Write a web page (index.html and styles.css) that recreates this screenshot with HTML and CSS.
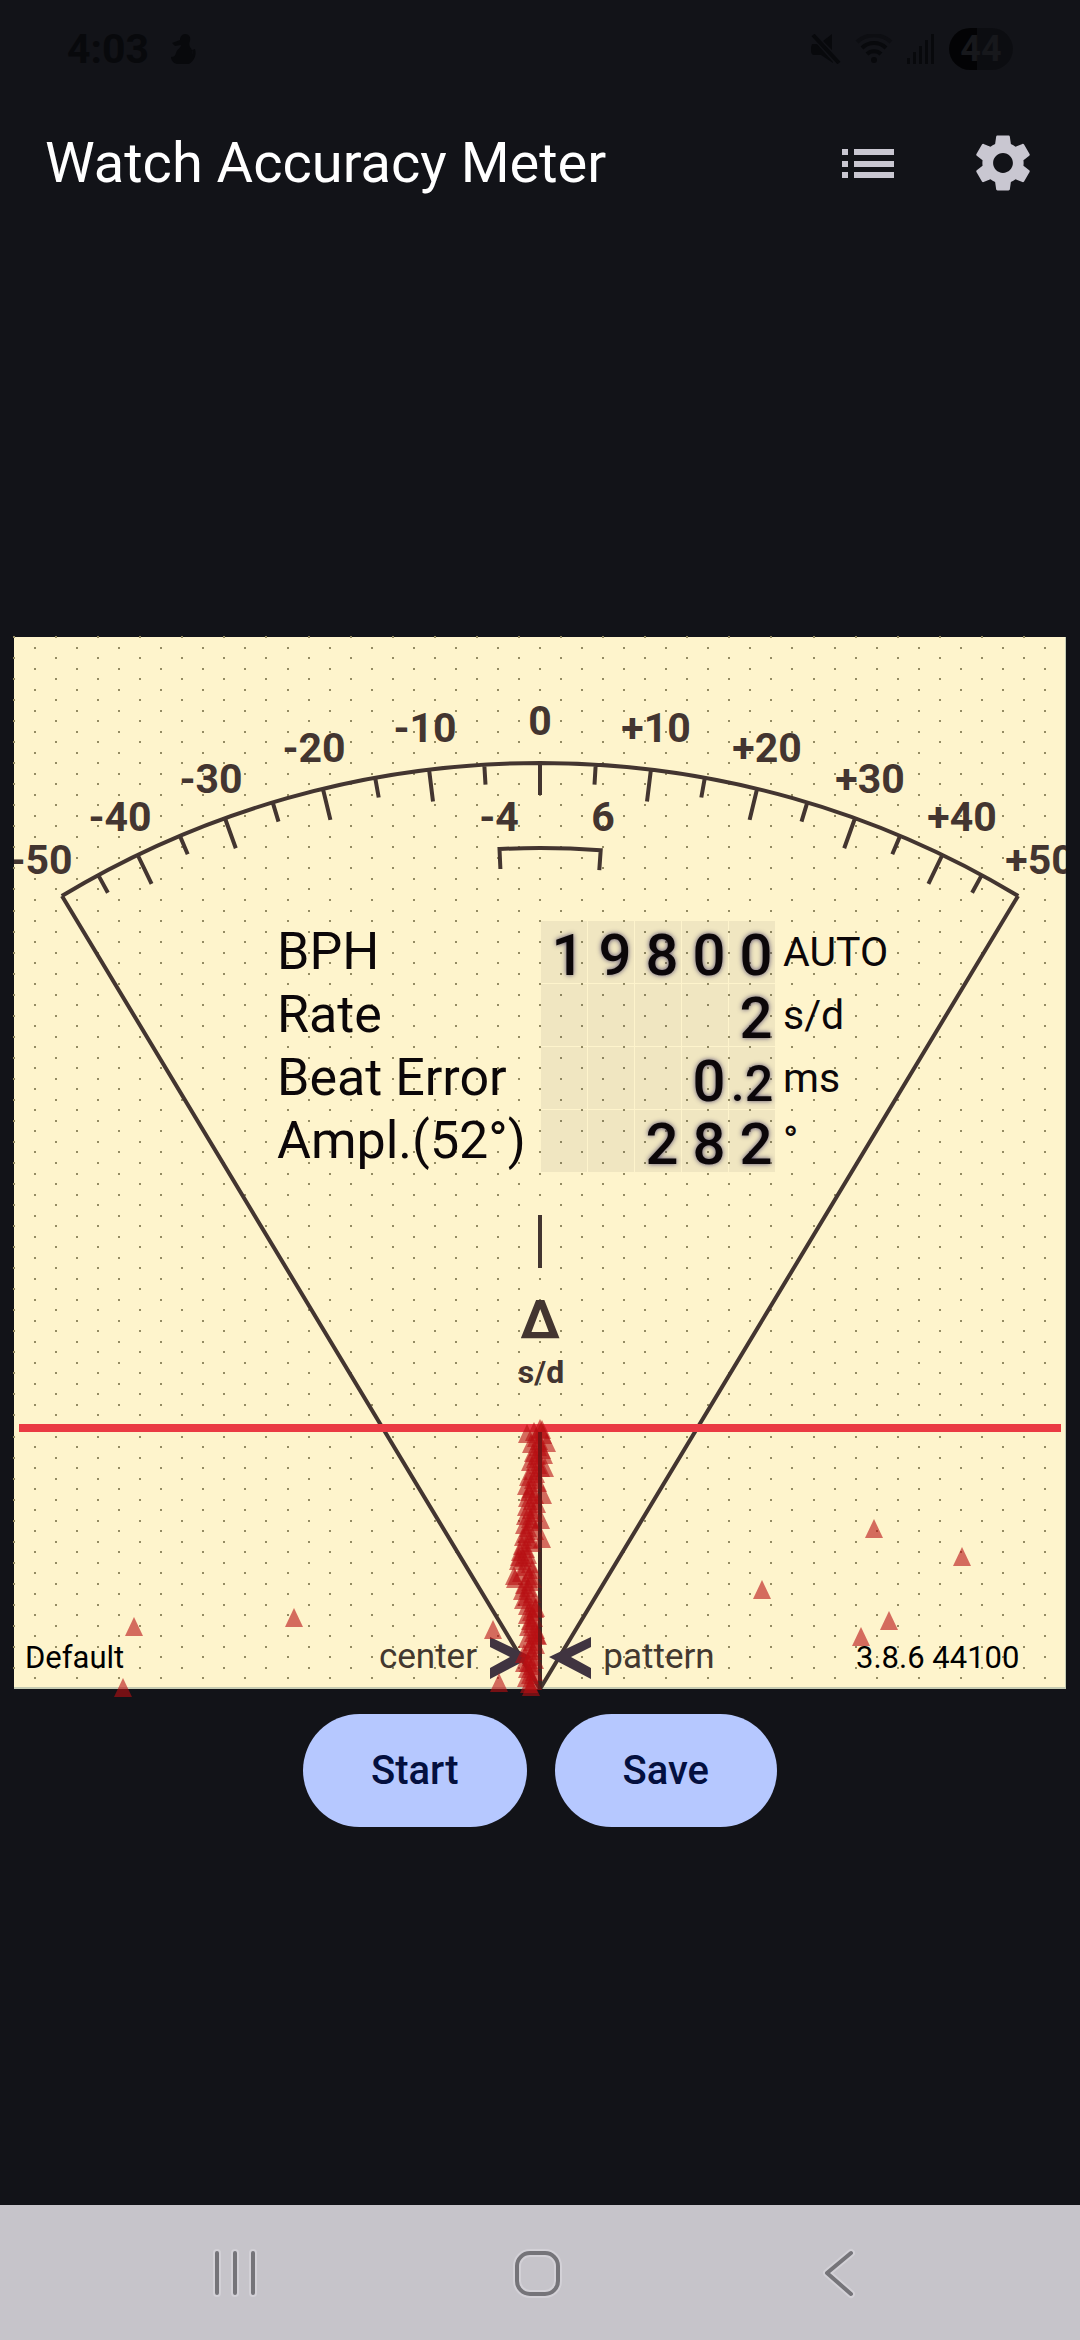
FILE: index.html
```html
<!DOCTYPE html>
<html lang="en">

<head>
    <meta charset="UTF-8">
    <meta name="viewport" content="width=device-width, initial-scale=1.0">
    <title>Watch Accuracy Meter</title>
    <link rel="stylesheet" href="styles.css">
</head>

<body>
    <div class="status-bar">
        <div class="status-left">
            <span class="clock">4:03</span>
            <svg class="status-icon" width="26" height="30" viewBox="0 0 26 30">
                <path d="M14 0c4 0 6 3 5 7-1 2-1 4 0 6 2 2 3 5 2 8 1-2 1-3 0-5l3-1c2 6-1 12-6 15H6c-4-1-6-4-6-7 3 0 4-1 5-4 1-4 5-5 5-8L4 12l-3-3 8-3c0-3 2-6 5-6z" />
            </svg>
        </div>
        <div class="status-right">
            <svg class="status-icon" width="30" height="30" viewBox="0 0 30 30">
                <path d="M1 10h5l16 18v1L10 21H3c-2 0-3-2-3-4v-4zM12 7l9-7v16z" />
                <path class="status-line" d="M2 1l26 28" />
            </svg>
            <svg class="status-icon" width="38" height="30" viewBox="0 0 38 30">
                <path class="status-line faint" d="M2 8a25 25 0 0 1 34 0" />
                <path class="status-line" d="M7 14a17 17 0 0 1 24 0M12 20a10 10 0 0 1 14 0" />
                <circle cx="19" cy="26" r="3" />
            </svg>
            <svg class="status-icon" width="28" height="30" viewBox="0 0 28 30">
                <path d="M0 24h3v6H0zM6 18h3v12H6zM12 12h3v18h-3zM18 6h3v24h-3zM24 0h3v30h-3z" />
            </svg>
            <span class="battery">44</span>
        </div>
    </div>

    <header class="app-bar">
        <h1>Watch Accuracy Meter</h1>
        <button type="button" class="icon-button" aria-label="List">
            <svg width="52" height="29" viewBox="0 0 52 29">
                <path d="M0 0h6v6H0zM12 0h40v6H12zM0 12h6v6H0zM12 12h40v6H12zM0 23h6v6H0zM12 23h40v6H12z" />
            </svg>
        </button>
        <button type="button" class="icon-button" aria-label="Settings">
            <svg width="66" height="66" viewBox="0 0 24 24">
                <path d="M19.43 12.98c.04-.32.07-.64.07-.98s-.03-.66-.07-.98l2.11-1.65c.19-.15.24-.42.12-.64l-2-3.46c-.12-.22-.39-.3-.61-.22l-2.49 1c-.52-.4-1.08-.73-1.69-.98l-.38-2.65C14.46 2.18 14.25 2 14 2h-4c-.25 0-.46.18-.49.42l-.38 2.65c-.61.25-1.17.59-1.69.98l-2.49-1c-.23-.09-.49 0-.61.22l-2 3.46c-.13.22-.07.49.12.64l2.11 1.65c-.04.32-.07.65-.07.98s.03.66.07.98l-2.11 1.65c-.19.15-.24.42-.12.64l2 3.46c.12.22.39.3.61.22l2.49-1c.52.4 1.08.73 1.69.98l.38 2.65c.03.24.24.42.49.42h4c.25 0 .46-.18.49-.42l.38-2.65c.61-.25 1.17-.59 1.69-.98l2.49 1c.23.09.49 0 .61-.22l2-3.46c.12-.22.07-.49-.12-.64l-2.11-1.65zM12 15.6c-1.98 0-3.6-1.62-3.6-3.6s1.62-3.6 3.6-3.6 3.6 1.62 3.6 3.6-1.62 3.6-3.6 3.6z" />
            </svg>
        </button>
    </header>

    <main>
        <div class="meter">
            <svg class="dial" viewBox="0 0 1052 1052">
                <defs>
                    <clipPath id="paper">
                        <rect width="1052" height="1052" />
                    </clipPath>
                </defs>
                <path id="dots" class="dots" />
                <g clip-path="url(#paper)">
                    <g id="labels" class="scale-label"></g>
                    <path id="scale" class="scale" />
                    <path class="scale" d="M48 259L526 1052L1004 259" />
                    <path class="scale" d="M526 578v53" />
                    <text class="delta" x="526" y="701">Δ</text>
                    <text class="delta-unit" x="527" y="746">s/d</text>
                    <text class="hint" x="414" y="1031">center</text>
                    <text class="hint" x="645" y="1031">pattern</text>
                    <path class="marker" d="M476 1000L518 1020L476 1042V1031L496 1020L476 1010Z" />
                    <path class="marker" d="M577 1000L535 1020L577 1042V1031L557 1020L577 1010Z" />
                </g>
                <path class="red-line" d="M5 791H1047" />
                <path class="scale" d="M526 795V1052" />
                <g id="trace" class="trace"></g>
                <path class="center-line" d="M526 795V1052" />
                <text class="info" x="11" y="1031">Default</text>
                <text class="info" x="842" y="1031">3.8.6 44100</text>
            </svg>

            <table class="readout">
                <tr>
                    <th scope="row">BPH</th>
                    <td class="digits"><div><span>1</span><span>9</span><span>8</span><span>0</span><span>0</span></div></td>
                    <td class="unit">AUTO</td>
                </tr>
                <tr>
                    <th scope="row">Rate</th>
                    <td class="digits"><div><span></span><span></span><span></span><span></span><span>2</span></div></td>
                    <td class="unit">s/d</td>
                </tr>
                <tr>
                    <th scope="row">Beat Error</th>
                    <td class="digits"><div><span></span><span></span><span></span><span>0</span><span><small>.2</small></span></div></td>
                    <td class="unit">ms</td>
                </tr>
                <tr>
                    <th scope="row">Ampl.(52°)</th>
                    <td class="digits"><div><span></span><span></span><span>2</span><span>8</span><span>2</span></div></td>
                    <td class="unit">°</td>
                </tr>
            </table>
        </div>

        <div class="actions">
            <button type="button">Start</button>
            <button type="button">Save</button>
        </div>
    </main>

    <nav class="nav-bar">
        <button type="button" aria-label="Recent apps">
            <svg width="52" height="56" viewBox="0 0 52 56">
                <path class="halo" d="M8 8v40M26 8v40M44 8v40" />
                <path d="M8 8v40M26 8v40M44 8v40" />
            </svg>
        </button>
        <button type="button" aria-label="Home">
            <svg width="52" height="56" viewBox="0 0 52 56">
                <rect class="halo" x="6" y="8" width="41" height="41" rx="13" />
                <rect x="6" y="8" width="41" height="41" rx="13" />
            </svg>
        </button>
        <button type="button" aria-label="Back">
            <svg width="52" height="56" viewBox="0 0 52 56">
                <path class="halo" d="M38 8L14 28L38 49" />
                <path d="M38 8L14 28L38 49" />
            </svg>
        </button>
    </nav>

    <script src="script.js"></script>
</body>

</html>
```

FILE: styles.css
```css
* {
    box-sizing: border-box;
}

body {
    font-family: Roboto, sans-serif;
    background-color: #121318;
    color: #fff;
    margin: 0;
    min-height: 100vh;
    display: flex;
    flex-direction: column;
}

button {
    font-family: inherit;
    border: none;
    padding: 0;
    cursor: pointer;
}

/* Status bar */
.status-bar {
    display: flex;
    justify-content: space-between;
    align-items: center;
    height: 98px;
    padding: 0 67px;
    color: #08090c;
}

.status-left,
.status-right {
    display: flex;
    align-items: center;
}

.status-left {
    gap: 22px;
}

.status-right {
    gap: 14px;
}

.clock {
    font-size: 41px;
    font-weight: bold;
}

.status-icon {
    fill: #08090c;
}

.status-line {
    fill: none;
    stroke: #08090c;
    stroke-width: 4;
}

.faint {
    stroke: #0d0e12;
}

.battery {
    width: 64px;
    height: 42px;
    border-radius: 21px;
    background: linear-gradient(to right, #030305 44%, #0c0d11 44%);
    color: #17181c;
    font-size: 36px;
    font-weight: bold;
    line-height: 42px;
    text-align: center;
}

/* App bar */
.app-bar {
    display: flex;
    align-items: center;
    height: 130px;
    padding: 0 10px 0 45px;
}

.app-bar h1 {
    flex: 1;
    margin: 0;
    font-size: 56px;
    font-weight: normal;
}

.icon-button {
    display: flex;
    justify-content: center;
    align-items: center;
    width: 135px;
    height: 126px;
    background: none;
    fill: #c9c7d1;
}

/* Meter */
main {
    flex: 1;
    display: flex;
    flex-direction: column;
    justify-content: center;
    gap: 25px;
    padding: 31px 14px 0;
}

.meter {
    display: grid;
    background-color: #fef4cc;
    box-shadow: inset -1px -2px #c5cbb3;
}

.dial,
.readout {
    grid-area: 1 / 1;
}

.dial {
    display: block;
    width: 100%;
    overflow: visible;
}

.dots {
    fill: none;
    stroke: #948b63;
    stroke-width: 2;
}

.scale {
    fill: none;
    stroke: #433530;
    stroke-width: 4;
}

.scale-label,
.delta,
.delta-unit {
    fill: #433530;
    font-weight: bold;
    text-anchor: middle;
}

.scale-label {
    font-size: 41px;
}

.delta {
    font-size: 54px;
}

.delta-unit {
    font-size: 32px;
}

.hint {
    fill: #43382f;
    font-size: 35px;
    text-anchor: middle;
}

.marker {
    fill: #403440;
}

.red-line {
    stroke: #ea3a43;
    stroke-width: 8;
}

.trace {
    fill: #b80f12;
    fill-opacity: 0.6;
}

.center-line {
    stroke: #3b1a18;
    stroke-opacity: 0.5;
    stroke-width: 4;
}

.info {
    fill: #000;
    font-size: 31px;
}

/* Readout */
.readout {
    align-self: start;
    justify-self: start;
    margin: 27% 0 0 25%;
    border-collapse: collapse;
    color: #0c0709;
    z-index: 1;
}

.readout th,
.readout td {
    height: 63px;
    padding: 0;
    line-height: 62px;
    text-align: left;
    vertical-align: top;
}

.readout th {
    min-width: 264px;
    font-size: 52px;
    font-weight: normal;
    white-space: nowrap;
}

.digits div {
    display: flex;
    gap: 1px;
}

.digits span {
    width: 46px;
    height: 62px;
    padding-left: 8px;
    background-color: rgba(50, 50, 60, 0.07);
    font-size: 58px;
    font-weight: 500;
    line-height: 68px;
    text-align: center;
    text-shadow: 0 0 5px rgba(50, 40, 90, 0.8);
}

.digits small {
    margin-left: -8px;
    font-size: 50px;
    line-height: 1;
}

.readout .unit {
    padding-left: 8px;
    font-size: 41px;
}

/* Buttons */
.actions {
    display: flex;
    justify-content: center;
    gap: 28px;
}

.actions button {
    height: 113px;
    padding: 0 68px;
    border-radius: 57px;
    background-color: #b6c8ff;
    color: #04103f;
    font-size: 40px;
    font-weight: 500;
}

/* Navigation bar */
.nav-bar {
    display: flex;
    height: 135px;
    padding: 0 90px 0 84px;
    background-color: #c6c4ca;
}

.nav-bar button {
    flex: 1;
    display: flex;
    justify-content: center;
    align-items: center;
    background: none;
}

.nav-bar svg {
    fill: none;
    stroke: #757479;
    stroke-width: 4;
    stroke-linecap: round;
    stroke-linejoin: round;
}

.nav-bar .halo {
    stroke: #d3d1d7;
    stroke-width: 8;
}
```

FILE: script.js
```js
const SVG_NS = "http://www.w3.org/2000/svg";

// Pivot of the dial, in viewBox units
const CX = 526;
const CY = 1052;

// Position of a rate value (s/d) at a given distance from the pivot
function polar(value, radius) {
    const angle = Math.atan(value * 0.01206);
    const x = CX + radius * Math.sin(angle);
    const y = CY - radius * Math.cos(angle);
    return x.toFixed(1) + " " + y.toFixed(1);
}

// Dot grid
let dots = "";
for (let row = 0; row < 100; row++) {
    for (let col = row % 2; col < 50; col += 2) {
        dots += `M${Math.round(col * 21.04) - 1} ${Math.round(row * 10.52)}h2`;
    }
}
document.getElementById("dots").setAttribute("d", dots);

// Main scale with ticks, and the small range bracket
let scale = `M${polar(-50, 926)}A926 926 0 0 1 ${polar(50, 926)}`;
for (let value = -45; value <= 45; value += 5) {
    const length = value % 10 === 0 ? 32 : 20;
    scale += `M${polar(value, 926)}L${polar(value, 926 - length)}`;
}
scale += `M${polar(-4, 821)}L${polar(-4, 841)}A841 841 0 0 1 ${polar(6, 841)}L${polar(6, 821)}`;
document.getElementById("scale").setAttribute("d", scale);

// Scale labels: text, x, y
const labels = [
    ["-50", 27, 237], ["-40", 106, 194], ["-30", 197, 156], ["-20", 300, 125], ["-10", 411, 105],
    ["0", 526, 98],
    ["+10", 642, 105], ["+20", 753, 125], ["+30", 856, 156], ["+40", 948, 194], ["+50", 1026, 237],
    ["-4", 485, 194], ["6", 589, 194]
];
labels.forEach(([text, x, y]) => {
    const label = document.createElementNS(SVG_NS, "text");
    label.setAttribute("x", x);
    label.setAttribute("y", y);
    label.textContent = text;
    document.getElementById("labels").appendChild(label);
});

// Beats, one every 3 units from the top of the trace
const beats = [
    526, 520, 529, 522, 525, 517, 524, 528, 519, 523, 521,
    516, 524, 527, 518, 522, 514, 519, 524, 512, 517,
    515, 521, 513, 518, 523, 512, 517, 520, 511, 516,
    518, 510, 514, 521, 512, 509, 515, 518, 508, 512,
    506, 514, 509, 504, 516, 511, 518, 507, 515, 519,
    516, 510, 514, 508, 518, 512, 509, 519, 513, 521,
    517, 513, 520, 516, 518, 514, 522, 519, 524, 513,
    518, 522, 515, 519, 510, 517, 521, 514, 518, 513, 520, 516, 512, 519, 515, 517
];

// Beats away from the trace
const strays = [
    [513, 806], [528, 802], [533, 815], [530, 827], [531, 840], [529, 867], [527, 892], [528, 911],
    [501, 951], [500, 948], [505, 929], [523, 1007], [522, 980], [510, 1035],
    [120, 999], [280, 990], [109, 1060], [479, 1002], [485, 1055],
    [860, 901], [948, 929], [748, 962], [875, 993], [847, 1009]
];

function addBeat(x, y) {
    const beat = document.createElementNS(SVG_NS, "path");
    beat.setAttribute("d", `M${x} ${y - 19}l9 19h-18z`);
    document.getElementById("trace").appendChild(beat);
}

beats.forEach((x, i) => addBeat(x, 801 + i * 3));
strays.forEach(([x, y]) => addBeat(x, y));
```
